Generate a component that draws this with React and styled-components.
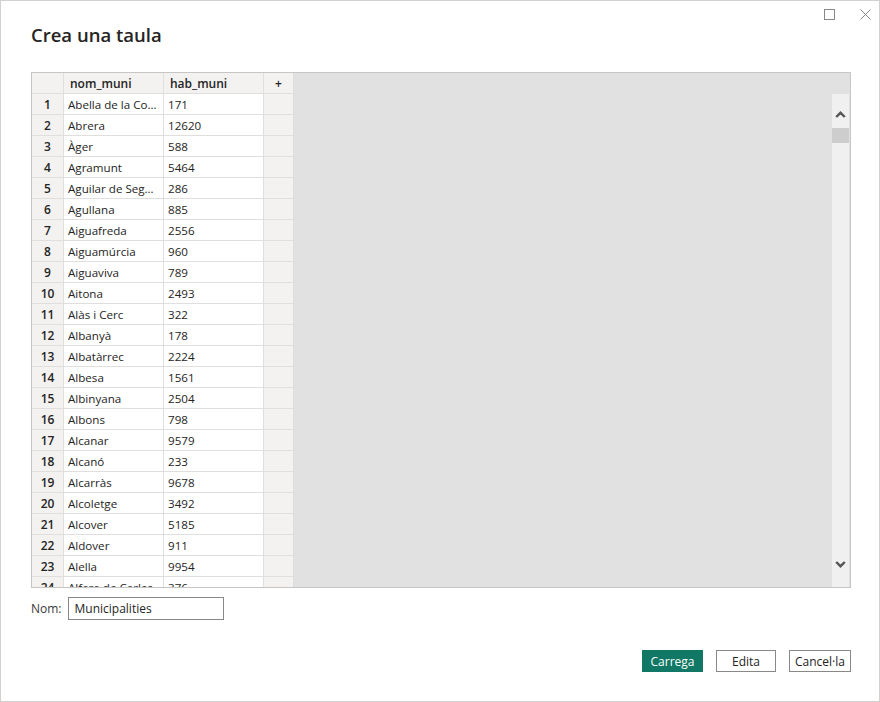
import styled, { createGlobalStyle } from "styled-components";

const GlobalStyle = createGlobalStyle`
    html, body {
        margin: 0;
        padding: 0;
        background: #ffffff;
    }
    body {
        font-family: "Segoe UI", "Open Sans", sans-serif;
        color: #252423;
    }
`;

const rows = [
    ["Abella de la Conca", "171"],
    ["Abrera", "12620"],
    ["Àger", "588"],
    ["Agramunt", "5464"],
    ["Aguilar de Segarra", "286"],
    ["Agullana", "885"],
    ["Aiguafreda", "2556"],
    ["Aiguamúrcia", "960"],
    ["Aiguaviva", "789"],
    ["Aitona", "2493"],
    ["Alàs i Cerc", "322"],
    ["Albanyà", "178"],
    ["Albatàrrec", "2224"],
    ["Albesa", "1561"],
    ["Albinyana", "2504"],
    ["Albons", "798"],
    ["Alcanar", "9579"],
    ["Alcanó", "233"],
    ["Alcarràs", "9678"],
    ["Alcoletge", "3492"],
    ["Alcover", "5185"],
    ["Aldover", "911"],
    ["Alella", "9954"],
    ["Alfara de Carles", "376"],
];

const Window = styled.div`
    width: 880px;
    height: 702px;
    box-sizing: border-box;
    border: 1px solid #d2d0ce;
    background: #ffffff;
    display: flex;
    flex-direction: column;
    padding: 0 28px 0 30px;
    overflow: hidden;
`;

const ControlsBar = styled.div`
    display: flex;
    justify-content: flex-end;
    gap: 25px;
    height: 21px;
    box-sizing: border-box;
    padding-top: 8px;
    margin-right: -20px;
`;

const ControlButton = styled.svg`
    width: 11px;
    height: 11px;
    display: block;
`;

const Title = styled.h1`
    margin: 0;
    font-size: 18.5px;
    line-height: 26px;
    font-weight: 600;
    color: #252423;
`;

const Frame = styled.div`
    margin-top: 24px;
    height: 516px;
    box-sizing: border-box;
    border: 1px solid #c8c6c4;
    display: flex;
    overflow: hidden;
    flex-shrink: 0;
`;

const Grid = styled.div`
    display: grid;
    grid-template-columns: 32px 100px 100px 30px;
    grid-auto-rows: 21px;
    align-content: start;
    background: #ffffff;
`;

const Cell = styled.div`
    box-sizing: border-box;
    border-right: 1px solid #e1dfdd;
    border-bottom: 1px solid #e1dfdd;
    background: ${(props) => (props.$shaded ? "#f3f2f1" : "#ffffff")};
    font-size: ${(props) => (props.$bold ? "12px" : "11.6px")};
    line-height: 22px;
    font-weight: ${(props) => (props.$bold ? 600 : 400)};
    text-align: ${(props) => (props.$center ? "center" : "left")};
    padding: ${(props) => (props.$center ? "0" : "0 4px")};
    white-space: nowrap;
    overflow: hidden;
    text-overflow: ellipsis;
    color: #252423;
`;

const HeaderCell = styled(Cell)`
    padding: ${(props) => (props.$center ? "0" : "0 6px")};
`;

const EmptyArea = styled.div`
    flex: 1;
    background: #e1e1e1;
    display: flex;
    justify-content: flex-end;
    padding: 21px 1px 0 0;
`;

const Scrollbar = styled.div`
    width: 17px;
    background: #f0f0f0;
    display: flex;
    flex-direction: column;
    align-items: center;
`;

const ArrowSlot = styled.div`
    height: 34px;
    box-sizing: border-box;
    display: flex;
    justify-content: center;
    align-items: ${(props) => (props.$up ? "flex-end" : "flex-start")};
    padding: ${(props) => (props.$up ? "0 0 10px" : "8px 0 0")};
`;

const Track = styled.div`
    flex: 1;
    width: 100%;
`;

const Thumb = styled.div`
    width: 100%;
    height: 15px;
    background: #cdcdcd;
`;

const NameRow = styled.div`
    margin-top: 9px;
    display: flex;
    align-items: center;
    gap: 6px;
`;

const Label = styled.label`
    font-size: 12px;
    color: #3b3a39;
`;

const NameInput = styled.div`
    width: 156px;
    height: 23px;
    box-sizing: border-box;
    border: 1px solid #8a8886;
    font-size: 12px;
    line-height: 21px;
    padding: 0 6px;
    color: #252423;
`;

const Footer = styled.div`
    margin-top: 30px;
    display: flex;
    justify-content: flex-end;
    gap: 13px;
`;

const Button = styled.button`
    height: 22px;
    width: ${(props) => props.$width}px;
    box-sizing: border-box;
    padding: 0;
    font-family: "Segoe UI", "Open Sans", sans-serif;
    font-size: 12px;
    border: 1px solid ${(props) => (props.$primary ? "#117865" : "#8a8886")};
    background: ${(props) => (props.$primary ? "#117865" : "#ffffff")};
    color: ${(props) => (props.$primary ? "#ffffff" : "#252423")};
    cursor: pointer;
`;

function Chevron({ up }) {
    return (
        <svg width="11" height="7" viewBox="0 0 11 7">
            <polyline
                points={up ? "1.2,6 5.5,1.8 9.8,6" : "1.2,1 5.5,5.2 9.8,1"}
                fill="none"
                stroke="#555555"
                strokeWidth="2.4"
            />
        </svg>
    );
}

function App() {
    return (
        <>
            <GlobalStyle />
            <Window>
                <ControlsBar>
                    <ControlButton viewBox="0 0 11 11">
                        <rect x="0.5" y="0.5" width="10" height="10" fill="none" stroke="#8a8886" />
                    </ControlButton>
                    <ControlButton viewBox="0 0 11 11">
                        <path d="M0.5 0.5 L10.5 10.5 M10.5 0.5 L0.5 10.5" stroke="#8a8886" fill="none" />
                    </ControlButton>
                </ControlsBar>
                <Title>Crea una taula</Title>
                <Frame>
                    <Grid>
                        <HeaderCell $shaded $center />
                        <HeaderCell $shaded $bold>nom_muni</HeaderCell>
                        <HeaderCell $shaded $bold>hab_muni</HeaderCell>
                        <HeaderCell $shaded $bold $center>+</HeaderCell>
                        {rows.map(([name, hab], i) => (
                            <>
                                <Cell key={`i${i}`} $shaded $bold $center>{i + 1}</Cell>
                                <Cell key={`n${i}`}>{name}</Cell>
                                <Cell key={`h${i}`}>{hab}</Cell>
                                <Cell key={`p${i}`} $shaded />
                            </>
                        ))}
                    </Grid>
                    <EmptyArea>
                        <Scrollbar>
                            <ArrowSlot $up>
                                <Chevron up />
                            </ArrowSlot>
                            <Thumb />
                            <Track />
                            <ArrowSlot>
                                <Chevron />
                            </ArrowSlot>
                        </Scrollbar>
                    </EmptyArea>
                </Frame>
                <NameRow>
                    <Label>Nom:</Label>
                    <NameInput>Municipalities</NameInput>
                </NameRow>
                <Footer>
                    <Button $primary $width={61}>Carrega</Button>
                    <Button $width={60}>Edita</Button>
                    <Button $width={62}>Cancel·la</Button>
                </Footer>
            </Window>
        </>
    );
}

export default App;
